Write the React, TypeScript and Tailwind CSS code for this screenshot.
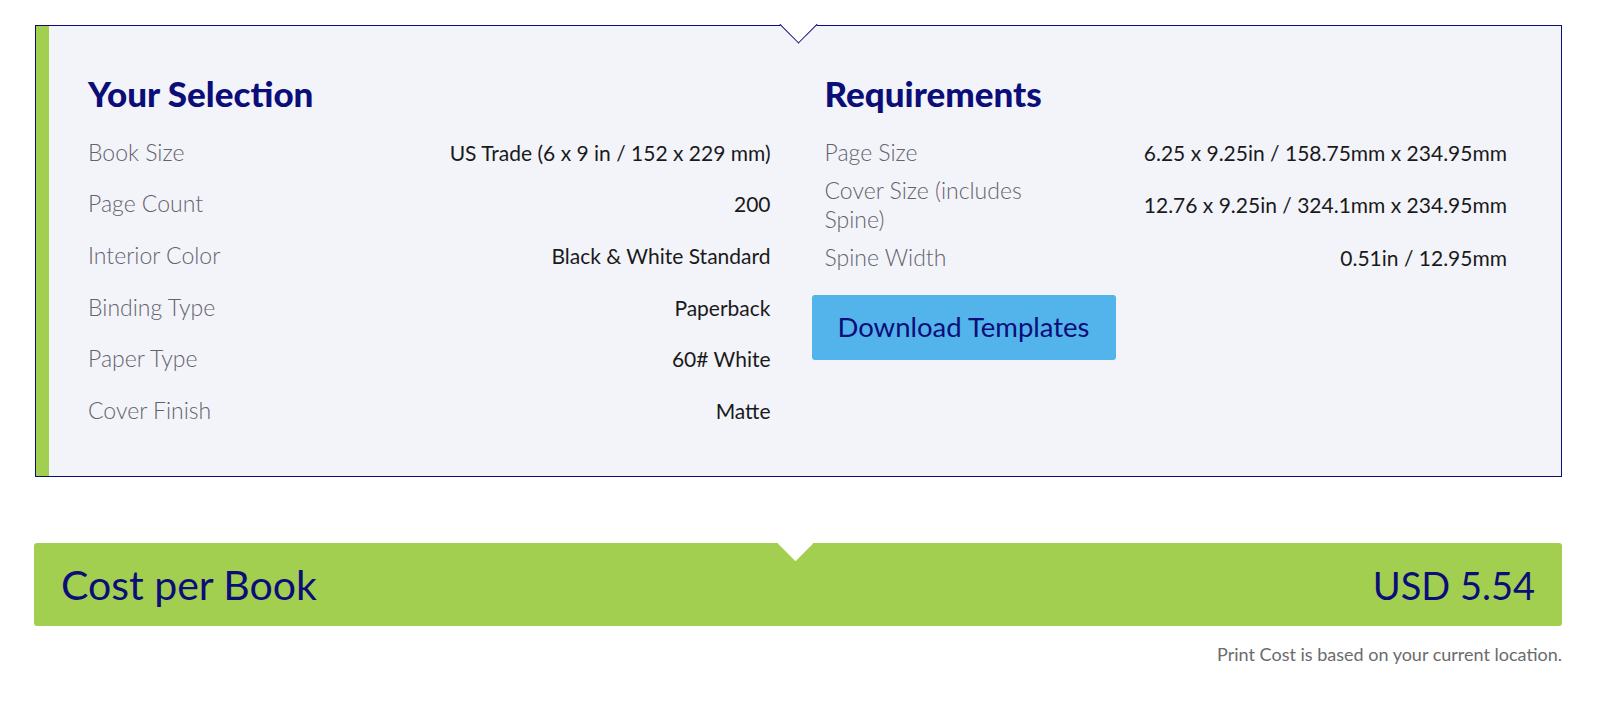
import React from 'react'

const selection = [
  { label: 'Book Size', value: 'US Trade (6 x 9 in / 152 x 229 mm)' },
  { label: 'Page Count', value: '200' },
  { label: 'Interior Color', value: 'Black & White Standard' },
  { label: 'Binding Type', value: 'Paperback' },
  { label: 'Paper Type', value: '60# White' },
  { label: 'Cover Finish', value: 'Matte' },
]

const requirements = [
  { label: 'Page Size', value: '6.25 x 9.25in / 158.75mm x 234.95mm' },
  { label: 'Cover Size (includes Spine)', value: '12.76 x 9.25in / 324.1mm x 234.95mm' },
  { label: 'Spine Width', value: '0.51in / 12.95mm' },
]

const font = { fontFamily: 'Lato, "Open Sans", sans-serif' }

export default function App() {
  return (
    <div className="min-h-screen w-full bg-white pl-[35px] pr-[38px] pt-[25px]" style={font}>
      {/* SUMMARY PANEL */}
      <section className="relative flex border border-[#0b0d78] bg-[#f3f4fa]">
        <div className="absolute left-1/2 top-[-15.5px] -ml-[14px] h-[27px] w-[27px] rotate-45 border-b border-r border-[#0b0d78] bg-white" />
        <div className="w-[13px] shrink-0 bg-[#a3cf50]" />
        <div className="grid flex-1 grid-cols-2 gap-[54px] pb-[40px] pl-[39px] pr-[54px] pt-[49px]">
          <div>
            <h2 className="text-[35px] font-black leading-[36px] text-[#0b0d78]">Your Selection</h2>
            <div className="mt-[15.5px]">
              {selection.map((row) => (
                <div key={row.label} className="flex items-center justify-between py-[11.3px]">
                  <span className="text-[23px] font-light leading-[29px] text-[#63636d]">{row.label}</span>
                  <span className="text-[21px] leading-[29px] text-[#1a1a1a]">{row.value}</span>
                </div>
              ))}
            </div>
          </div>

          <div>
            <h2 className="text-[35px] font-black leading-[36px] text-[#0b0d78]">Requirements</h2>
            <div className="mt-[22px]">
              {requirements.map((row) => (
                <div key={row.label} className="flex items-center justify-between py-[4.5px]">
                  <span className="w-[240px] text-[23px] font-light leading-[29px] text-[#63636d]">
                    {row.label}
                  </span>
                  <span className="text-[21px] leading-[29px] text-[#1a1a1a]">{row.value}</span>
                </div>
              ))}
            </div>
            <button className="-ml-[13px] mt-[18.5px] h-[65px] w-[304px] rounded-[3px] bg-[#52b4ea] text-[27.5px] text-[#0b0d78]">
              Download Templates
            </button>
          </div>
        </div>
      </section>

      {/* COST BAR */}
      <section className="relative -ml-px mt-[66px] flex h-[83px] items-center justify-between rounded-[3px] bg-[#a3cf50] pl-[27px] pr-[27px]">
        <div className="absolute left-1/2 top-[-12.5px] -ml-[15px] h-[25px] w-[25px] rotate-45 bg-white" />
        <span className="text-[41px] leading-none text-[#0b0d78]">Cost per Book</span>
        <span className="text-[38px] leading-none text-[#0b0d78]">USD 5.54</span>
      </section>
      <p className="mt-[15px] text-right text-[18px] text-[#6b6b6b]">Print Cost is based on your current location.</p>
    </div>
  )
}
